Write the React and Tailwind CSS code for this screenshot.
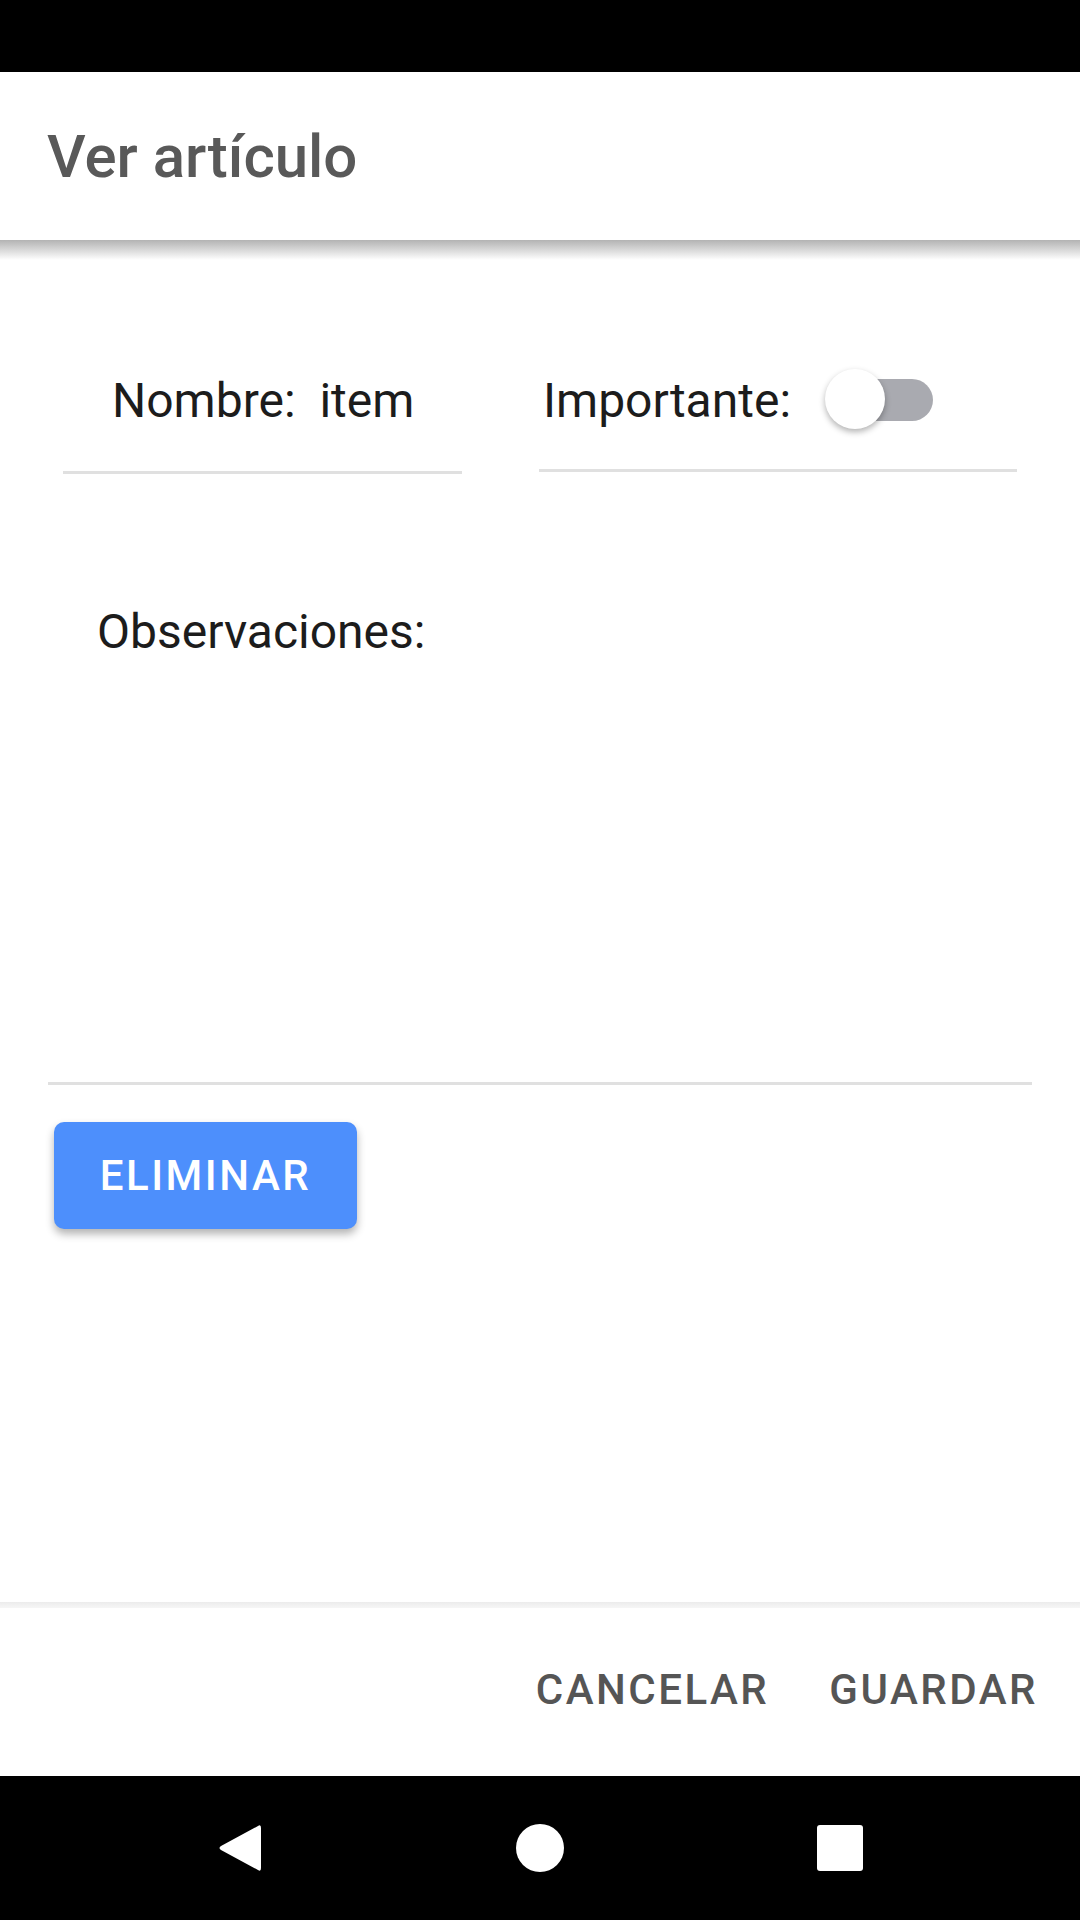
const App = () => {
  return (
    <div
      className="w-[1080px] h-[1920px] bg-white flex flex-col overflow-hidden"
      style={{ fontFamily: "Roboto, 'Noto Sans', sans-serif" }}
    >
      {/* Status bar */}
      <div className="h-[72px] bg-black shrink-0"></div>

      {/* Header */}
      <div className="h-[168px] bg-white shrink-0 pl-[47px] pt-[50px]">
        <h1 className="text-[60px] leading-[70px] font-medium text-[#595959]">
          Ver artículo
        </h1>
      </div>
      <div className="h-[20px] shrink-0 bg-gradient-to-b from-[#b3b3b3] to-white"></div>

      {/* Content */}
      <div className="flex-1 flex flex-col pt-[111px]">
        <div className="flex items-start">
          {/* Nombre */}
          <div className="ml-[63px] w-[399px] flex flex-col">
            <div className="pl-[49px] text-[48px] leading-[60px] text-[#1c1c1c]">
              Nombre:&nbsp; item
            </div>
            <div className="mt-[40px] h-[3px] bg-[#e0e0e0]"></div>
          </div>

          {/* Importante */}
          <div className="ml-[77px] w-[478px] flex flex-col">
            <div className="flex items-center pl-[4px]">
              <span className="w-[282px] text-[48px] leading-[60px] text-[#1c1c1c]">
                Importante:
              </span>
              <div className="relative w-[108px] h-[60px]">
                <div className="absolute left-[20px] top-[8px] w-[88px] h-[42px] rounded-full bg-[#a9aab0]"></div>
                <div className="absolute left-0 top-[-2px] w-[60px] h-[60px] rounded-full bg-white shadow-[0_3px_6px_rgba(0,0,0,0.3)]"></div>
              </div>
            </div>
            <div className="mt-[38px] h-[3px] bg-[#e0e0e0]"></div>
          </div>
        </div>

        {/* Observaciones */}
        <div className="mt-[128px] pl-[97px] text-[48px] leading-[60px] text-[#1c1c1c]">
          Observaciones:
        </div>
        <div className="mt-[420px] mx-[48px] h-[3px] bg-[#e0e0e0]"></div>

        {/* Eliminar */}
        <div className="mt-[37px] pl-[54px]">
          <button className="w-[303px] h-[107px] rounded-[10px] bg-[#4d8ffc] text-white text-[42px] font-medium tracking-[2.5px] shadow-[0_5px_8px_rgba(0,0,0,0.3)]">
            ELIMINAR
          </button>
        </div>
      </div>

      {/* Bottom actions */}
      <div className="h-[6px] shrink-0 bg-gradient-to-b from-[#ececec] to-[#f6f6f6]"></div>
      <div className="h-[168px] shrink-0 bg-white flex justify-end items-start pt-[57px] pr-[42px] gap-[60px]">
        <button className="text-[42px] leading-[50px] font-medium tracking-[2.5px] text-[#555555]">
          CANCELAR
        </button>
        <button className="text-[42px] leading-[50px] font-medium tracking-[2.5px] text-[#555555]">
          GUARDAR
        </button>
      </div>

      {/* Navigation bar */}
      <div className="h-[144px] shrink-0 bg-black flex items-center pl-[190px] gap-[200px]">
        <div className="w-[100px] h-[50px] flex items-center justify-center">
          <svg width="44" height="50" viewBox="0 0 44 50">
            <path
              d="M40 3 Q43 1 43 5 L43 45 Q43 49 40 47 L3 27 Q0 25 3 23 Z"
              fill="white"
            />
          </svg>
        </div>
        <div className="w-[100px] h-[50px] flex items-center justify-center">
          <div className="w-[48px] h-[48px] rounded-full bg-white"></div>
        </div>
        <div className="w-[100px] h-[50px] flex items-center justify-center">
          <div className="w-[46px] h-[46px] rounded-[3px] bg-white"></div>
        </div>
      </div>
    </div>
  );
};

export default App;
